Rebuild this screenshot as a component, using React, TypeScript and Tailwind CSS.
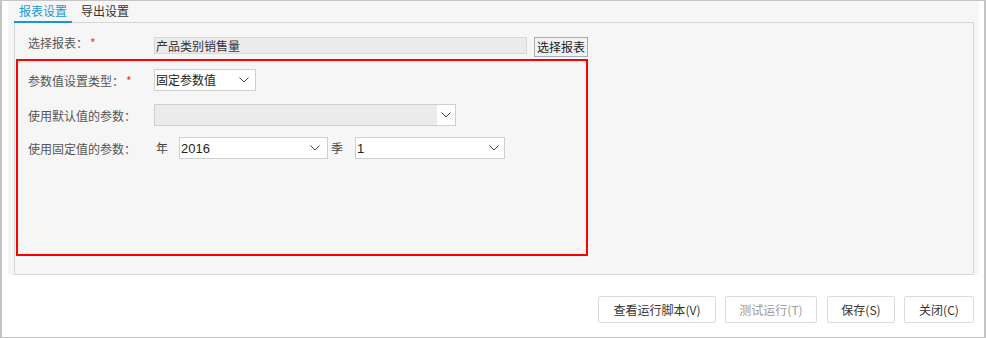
import React from 'react'

const font = { fontFamily: '"Noto Sans CJK SC", "Liberation Sans", sans-serif' }

function Chevron() {
  return (
    <svg width="10" height="6" viewBox="0 0 10 6" className="shrink-0">
      <polyline points="0.5,0.5 5,5 9.5,0.5" fill="none" stroke="#444" strokeWidth="1" />
    </svg>
  )
}

function Label({ text, required }: { text: string; required?: boolean }) {
  return (
    <div className="w-[136px] shrink-0 pl-[10px] text-[12px] leading-[17px] text-[#555]">
      {text}
      {required && <span className="ml-[2px] text-[#e4393c]">*</span>}
    </div>
  )
}

export default function App() {
  return (
    <div
      className="flex h-[338px] w-[986px] flex-col border-x-2 border-y border-[#c4c4c4] bg-white"
      style={font}
    >
      {/* 上部グレー領域 */}
      <div className="ml-[6px] mr-[5px] flex h-[274px] flex-col bg-[#f6f6f6] pl-[6px] pr-[5px]">
        {/* タブ */}
        <div className="relative z-10 flex h-[22px] items-end text-[12px] leading-[20px]">
          <div className="border-b-2 border-[#1a96d4] px-[5px] text-[#1a96d4]">报表设置</div>
          <div className="border-b-2 border-transparent pl-[9px] pr-[5px] text-[#333]">导出设置</div>
        </div>

        <div className="-mt-px flex-1 border border-[#d6d6d6] bg-[#f6f6f6]">
          {/* 选择报表 */}
          <div className="flex items-start pl-[3px] pt-[11px]">
            <Label text="选择报表：" required />
            <div className="mt-[3px] flex h-[17px] w-[373px] items-center border border-[#d8d8d8] bg-[#ebebeb] pl-px text-[12px] leading-none text-[#333]">
              产品类别销售量
            </div>
            <button className="ml-[7px] mt-[3px] flex h-[20px] w-[54px] items-center justify-center border border-[#a4adba] bg-[#f2f2f2] text-[12px] leading-none text-[#222]">
              选择报表
            </button>
          </div>

          {/* 参数设定 */}
          <div className="ml-px mt-[2px] h-[197px] w-[572px] border-2 border-[#ff0000] pt-[8px]">
            <div className="flex h-[22px] items-center">
              <Label text="参数值设置类型：" required />
              <div className="flex h-[22px] w-[102px] items-center justify-between border border-[#cfcfcf] bg-white pl-px pr-[6px] text-[12px] leading-none text-[#222]">
                <span>固定参数值</span>
                <Chevron />
              </div>
            </div>

            <div className="mt-[13px] flex h-[22px] items-center">
              <Label text="使用默认值的参数：" />
              <div className="flex h-[22px] w-[302px] border border-[#cfcfcf] bg-white">
                <div className="flex-1 bg-[#ebebeb]" />
                <div className="flex w-[18px] items-center justify-center">
                  <Chevron />
                </div>
              </div>
            </div>

            <div className="mt-[11px] flex h-[22px] items-center">
              <Label text="使用固定值的参数：" />
              <span className="w-[25px] pl-[2px] text-[12px] text-[#444]">年</span>
              <div className="flex h-[22px] w-[149px] items-center justify-between border border-[#cfcfcf] bg-white pl-px pr-[7px] text-[13px] leading-none text-[#222]" style={{ fontFamily: '"Liberation Sans", sans-serif' }}>
                <span>2016</span>
                <Chevron />
              </div>
              <span className="w-[27px] pl-[3px] text-[12px] text-[#444]">季</span>
              <div className="flex h-[22px] w-[150px] items-center justify-between border border-[#cfcfcf] bg-white pl-px pr-[5px] text-[13px] leading-none text-[#222]" style={{ fontFamily: '"Liberation Sans", sans-serif' }}>
                <span>1</span>
                <Chevron />
              </div>
            </div>
          </div>
        </div>
      </div>

      {/* 下部ボタン */}
      <div className="mt-[21px] flex justify-end gap-[9px] pr-[10px] text-[12px]">
        <button className="h-[27px] w-[118px] rounded-[2px] border border-[#dcdcdc] bg-white text-[#333]">查看运行脚本(V)</button>
        <button className="h-[27px] w-[92px] rounded-[2px] border border-[#dcdcdc] bg-white text-[#9a9a9a]">测试运行(T)</button>
        <button className="ml-px h-[27px] w-[68px] rounded-[2px] border border-[#dcdcdc] bg-white text-[#333]">保存(S)</button>
        <button className="h-[27px] w-[70px] rounded-[2px] border border-[#dcdcdc] bg-white text-[#333]">关闭(C)</button>
      </div>
    </div>
  )
}
